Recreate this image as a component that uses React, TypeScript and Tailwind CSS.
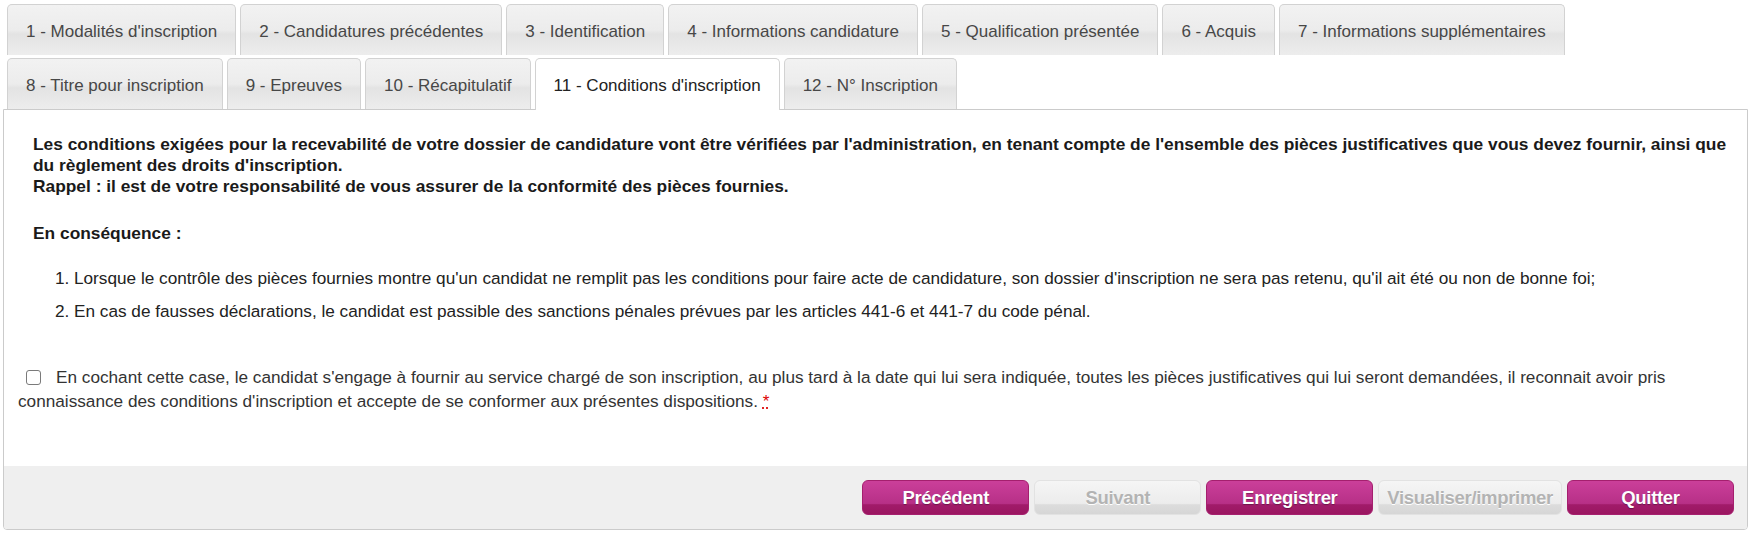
const tabs = [
  "1 - Modalités d'inscription",
  "2 - Candidatures précédentes",
  "3 - Identification",
  "4 - Informations candidature",
  "5 - Qualification présentée",
  "6 - Acquis",
  "7 - Informations supplémentaires",
  "8 - Titre pour inscription",
  "9 - Epreuves",
  "10 - Récapitulatif",
  "11 - Conditions d'inscription",
  "12 - N° Inscription",
];

const activeTab = 10;

const Tab = ({ label, active }: { label: string; active: boolean }) => (
  <div
    className={`h-[51px] px-[18px] pt-[3px] flex items-center whitespace-nowrap text-[17px]
    border border-b-0 border-[#d2d2d2] rounded-t-[5px]
    ${active ? "bg-white text-[#222] h-[52px] -mb-[1px] relative z-10" : "bg-[linear-gradient(to_bottom,#f2f2f2_0%,#ececec_50%,#e3e3e3_58%,#ededed_100%)] text-[#474747]"}`}
  >
    {label}
  </div>
);

const Btn = ({ label, disabled }: { label: string; disabled?: boolean }) => (
  <button
    className={`h-[35px] min-w-[167px] px-[8px] rounded-[6px] font-bold text-[18.5px] tracking-[-0.3px]
    flex items-center justify-center cursor-pointer
    ${disabled
      ? "bg-[linear-gradient(to_bottom,#f5f5f5_0%,#ececec_68%,#dcdcdc_72%,#d6d6d6_100%)] text-[#b3b3b3] [text-shadow:0_1px_0_#fff] border border-[#e2e2e2]"
      : "bg-[linear-gradient(to_bottom,#cb3f9a_0%,#b73087_68%,#a11b6a_72%,#9a1660_100%)] text-white [text-shadow:0_1px_1px_rgba(0,0,0,0.35)] border border-[#a51f6e]"}`}
  >
    {label}
  </button>
);

export default function App() {
  return (
    <div className="w-[1759px] h-[537px] bg-white font-['Liberation_Sans',Arial,sans-serif] text-[#222]">
      <div className="flex flex-wrap gap-x-[4px] gap-y-[3px] pl-[7px] pt-[4px] pr-[11px]">
        {tabs.map((t, i) => (
          <Tab key={t} label={t} active={i === activeTab} />
        ))}
      </div>

      <div className="ml-[3px] mr-[11px] border border-[#cbcbcb] rounded-b-[4px] overflow-hidden">
        <div className="px-[14px] pt-[24px]">
          <div className="ml-[15px] font-bold text-[17.35px] leading-[21px] text-[#1a1a1a]">
            <p>
              Les conditions exigées pour la recevabilité de votre dossier de candidature vont être vérifiées par
              l'administration, en tenant compte de l'ensemble des pièces justificatives que vous devez fournir, ainsi
              que du règlement des droits d'inscription.
            </p>
            <p>Rappel : il est de votre responsabilité de vous assurer de la conformité des pièces fournies.</p>
            <p className="mt-[26px]">En conséquence :</p>
          </div>

          <ol className="list-decimal pl-[56px] mt-[22px] text-[17.2px] leading-[24px] space-y-[9px]">
            <li>
              Lorsque le contrôle des pièces fournies montre qu'un candidat ne remplit pas les conditions pour faire
              acte de candidature, son dossier d'inscription ne sera pas retenu, qu'il ait été ou non de bonne foi;
            </li>
            <li>
              En cas de fausses déclarations, le candidat est passible des sanctions pénales prévues par les articles
              441-6 et 441-7 du code pénal.
            </li>
          </ol>

          <p className="mt-[42px] text-[17.2px] leading-[24px] text-[#333]">
            <input
              type="checkbox"
              className="appearance-none w-[15px] h-[15px] ml-[8px] mr-[15px] align-[-2px] border border-[#7a7a7a] rounded-[3px] bg-white"
            />
            En cochant cette case, le candidat s'engage à fournir au service chargé de son inscription, au plus tard à
            la date qui lui sera indiquée, toutes les pièces justificatives qui lui seront demandées, il reconnait avoir
            pris connaissance des conditions d'inscription et accepte de se conformer aux présentes dispositions.{" "}
            <abbr title="obligatoire" className="text-[#d00] underline decoration-dotted decoration-[#d00]">
              *
            </abbr>
          </p>
        </div>

        <div className="mt-[53px] h-[63px] bg-[#efefef] flex justify-end items-start pt-[14px] pr-[13px] gap-[5px]">
          <Btn label="Précédent" />
          <Btn label="Suivant" disabled />
          <Btn label="Enregistrer" />
          <Btn label="Visualiser/imprimer" disabled />
          <Btn label="Quitter" />
        </div>
      </div>
    </div>
  );
}
